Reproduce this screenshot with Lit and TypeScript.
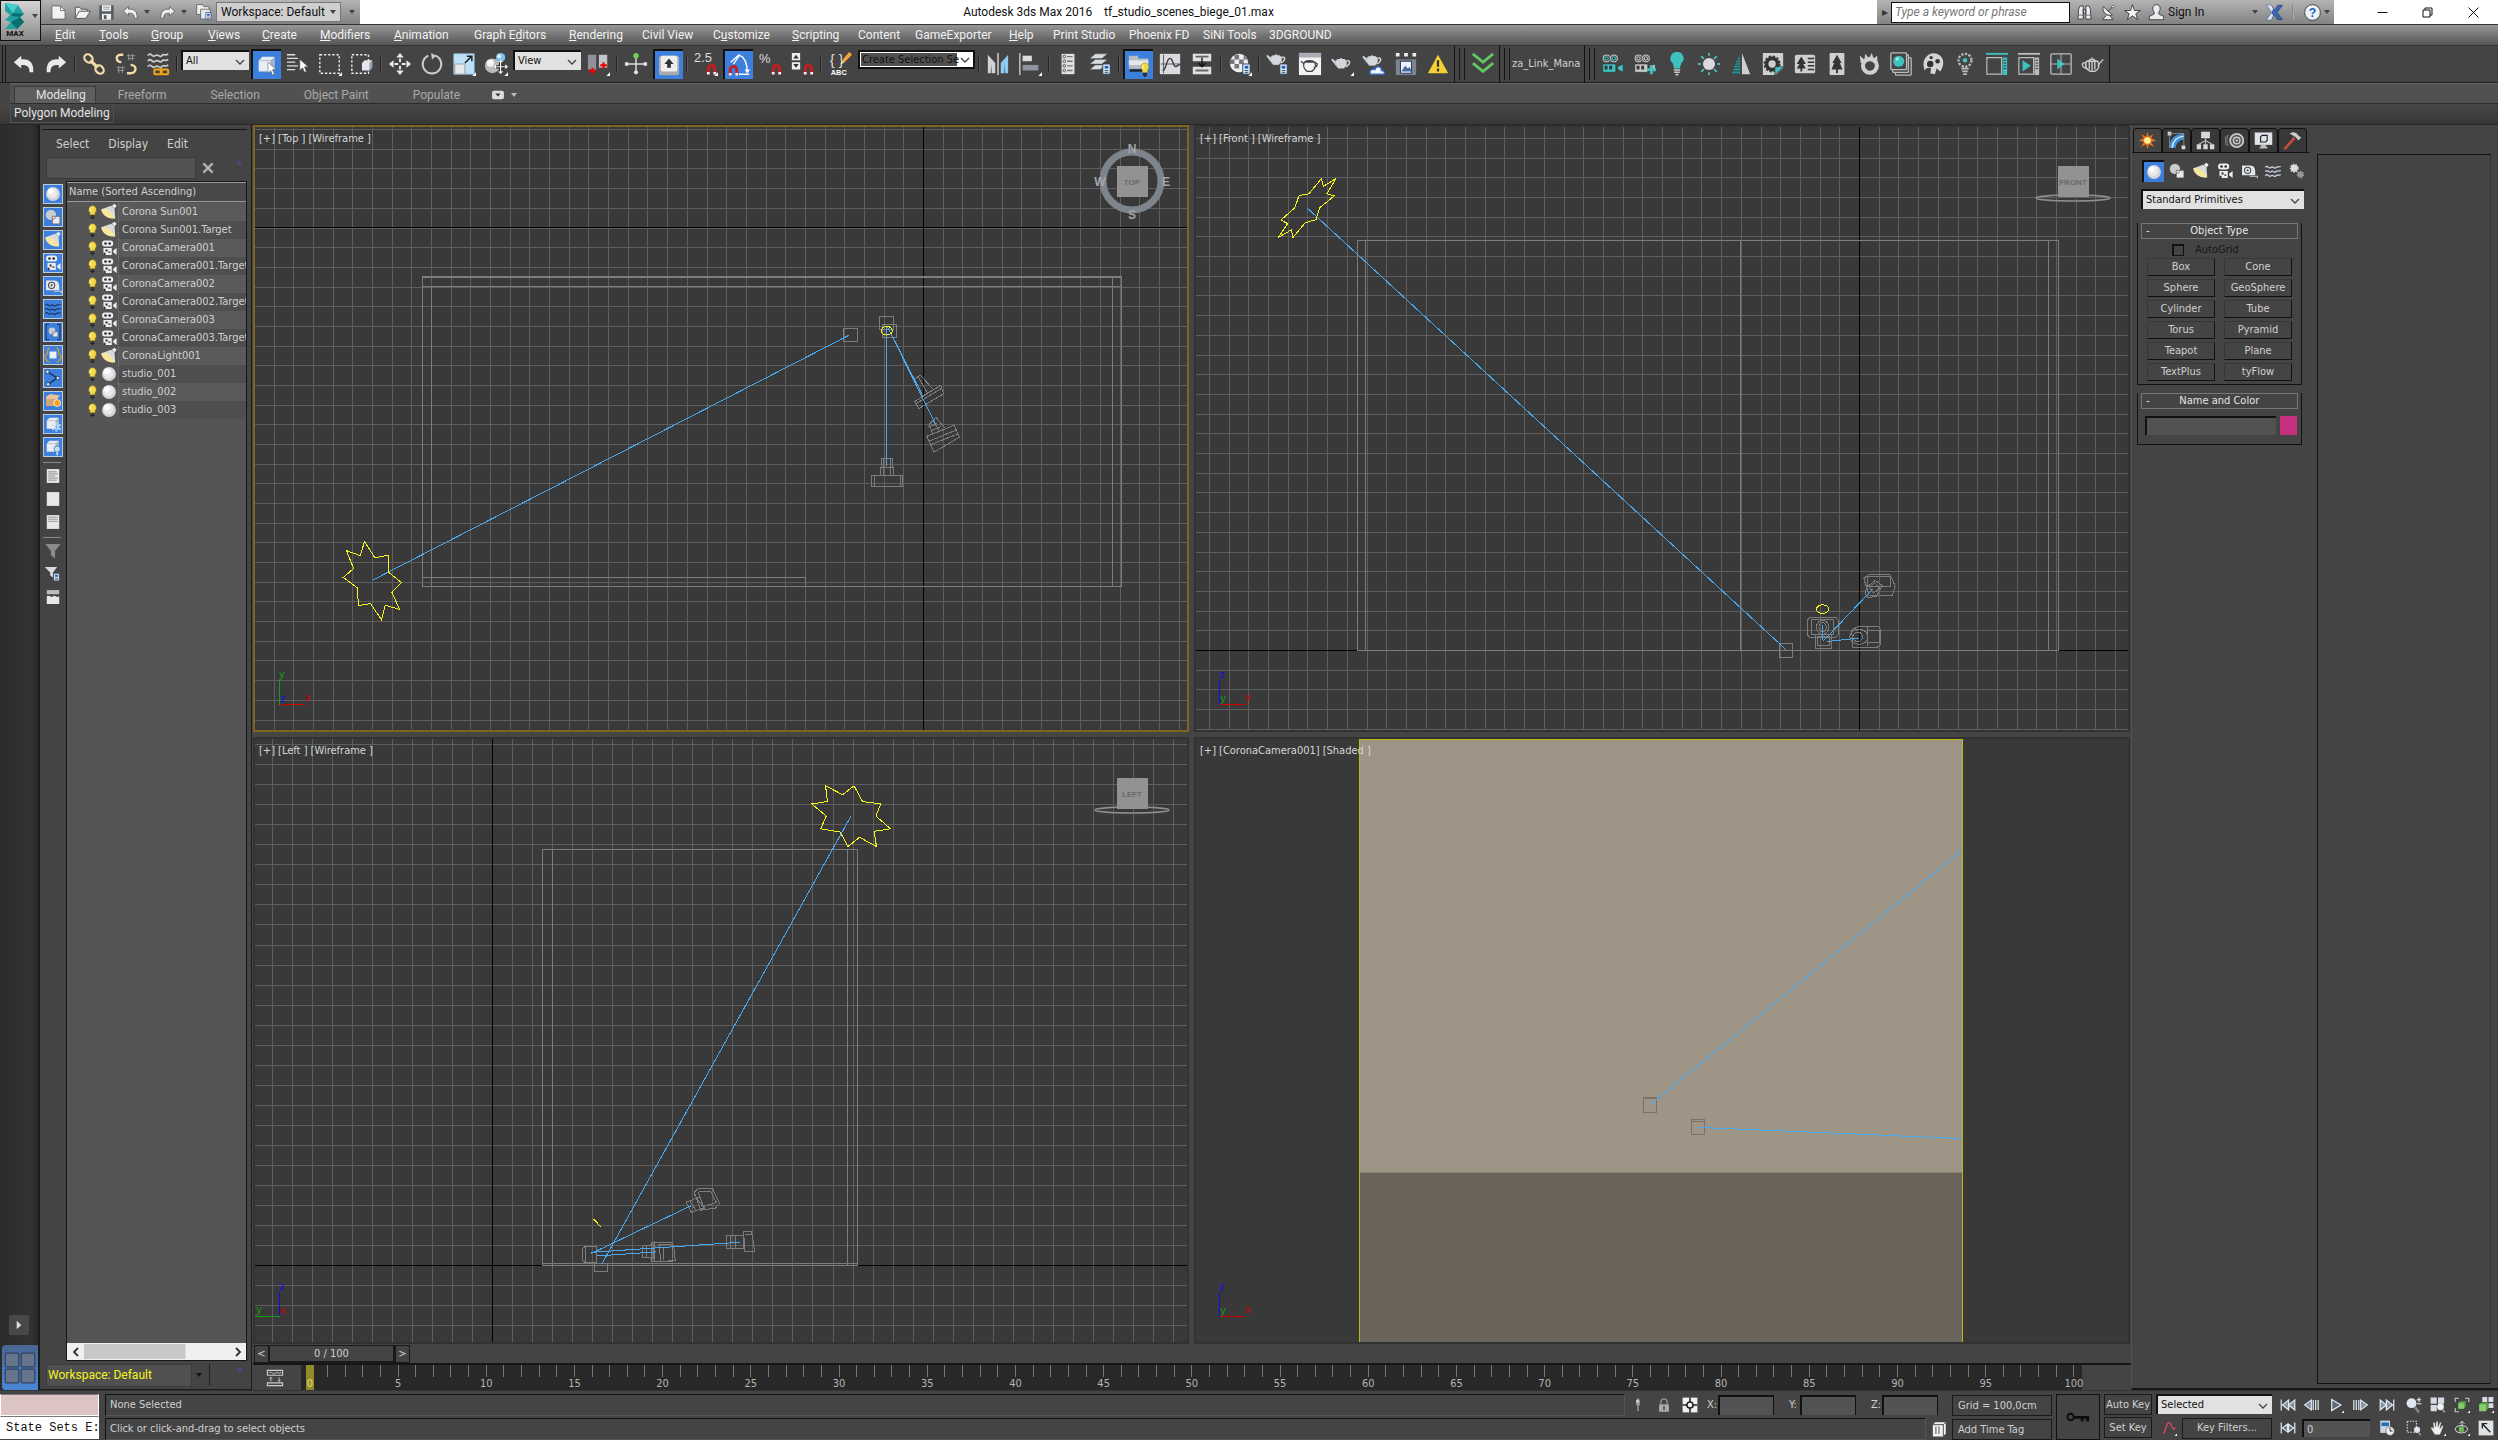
import { LitElement, html, svg, css, nothing, TemplateResult, SVGTemplateResult } from "lit";
import { customElement, state } from "lit/decorators.js";
import { classMap } from "lit/directives/class-map.js";

type Art = SVGTemplateResult;

/* ---------- shared icon parts ---------- */

const cursor = (x: number, y: number): Art =>
  svg`<path transform="translate(${x} ${y})" d="M0 0v12l3-3 2 5 2-1-2-5h4z" fill="#fff" stroke="#555" stroke-width=".6"/>`;
const corner = svg`<path d="M26 22v4h-4z" fill="#fff"/>`;
const magnet = (x: number, y: number): Art => svg`<g transform="translate(${x} ${y})" fill="none">
  <path d="M1.5 11V5a3.500 3.500 0 0 1 7 0v6" stroke="#c81e1e" stroke-width="3"/><path d="M0 10h3M7 10h3" stroke="#eee" stroke-width="2.600"/></g>`;
const teapot = (x: number, y: number, c = "#d3d6da"): Art => svg`<g transform="translate(${x} ${y})">
  <path d="M4 5c3-2 9-2 12 0 1 3 0 7-3 9H7C4 12 3 8 4 5z" fill="${c}" stroke="#777" stroke-width=".6"/>
  <path d="M4 7L0 3.500M4.500 10L0 4M16 6c4-2 5 3-1 6" fill="none" stroke="${c}" stroke-width="1.500"/><path d="M6 4.500h8M10 2.500v2" stroke="${c}" stroke-width="1.600"/></g>`;
const sheet = (x: number, y: number): Art => svg`<g transform="translate(${x} ${y})"><path d="M0 0h8v11H0z" fill="#e8eef5" stroke="#27415f"/><path d="M2 2h4v3H2z" fill="#1f5fc0"/><path d="M2 7h4M2 9h4" stroke="#27415f"/></g>`;
const reel = (c: string): Art => svg`<g fill="${c}" stroke="#2c2c2c" stroke-width=".6"><path d="M2 13h14v9H2zM18 16l6-3v9l-6-3z"/></g>
  <g fill="none" stroke="#2c2c2c" stroke-width=".8"><circle cx="6" cy="7" r="4.800" fill="#c9c9c9"/><circle cx="14" cy="7" r="4.800" fill="#c9c9c9"/><circle cx="6" cy="7" r="2.800" fill="${c}"/><circle cx="14" cy="7" r="2.800" fill="${c}"/></g>
  <g fill="#333"><circle cx="6" cy="7" r="1.200"/><circle cx="14" cy="7" r="1.200"/><path d="M4 15h3v4H4zM9 15h3v4H9z"/></g>`;
const bulb = svg`<path d="M13 1a7 7 0 0 1 4.500 12V17h-9v-4A7 7 0 0 1 13 1z" fill="#f3d94a" stroke="#8a7416" stroke-width=".8"/><path d="M11 5c-2 1-2 4-1 6" stroke="#fff" stroke-width="1.500" fill="none"/><path d="M9.500 19h7M9.500 21.500h7M11.500 24h3" stroke="#222" stroke-width="1.800"/>`;
const ball = svg`<circle cx="13" cy="13" r="10" fill="#d4d4d8"/><circle cx="12" cy="11.500" r="7.500" fill="#eaeaec"/><circle cx="10" cy="9" r="4" fill="#fff"/>`;
const shapes = svg`<circle cx="10" cy="10" r="7.500" fill="#c9ccd1"/><path d="M12 12h11v11H12z" fill="#e7e9ec" stroke="#555"/><path d="M12 17a7.500 7.500 0 0 0 5.500-5" fill="none" stroke="#555"/>`;
const lamp = svg`<path d="M16 4l5 4 1 14C12 23 3 17 2 9z" fill="#d9dadd"/><path d="M2 9c0 8 10 15 20 13C18 13 9 7 2 9z" fill="#f6e6a0"/><path d="M17 4l4-3 3 3-3 4z" fill="#eee"/>`;
const film = svg`<g fill="#eceef0"><rect x="3" y="2" width="16" height="9" rx="4"/><path d="M5 13h12v10H5zM19 17l5-4v10l-5-4z"/></g><g fill="#2b2e33"><circle cx="8" cy="6.500" r="1.900"/><circle cx="14" cy="6.500" r="1.900"/><path d="M8 15h3v3H8zM12 18h3v2h-3zM5 20h3v3H5z"/></g>`;
const tape = svg`<path d="M3 5h12c5 0 7 4 7 10v4H3z" fill="#e3e6ea"/><circle cx="11" cy="12" r="4.500" fill="none" stroke="#444" stroke-width="1.500"/><circle cx="11" cy="12" r="1.500" fill="#444"/><path d="M14 20.500h11v3" stroke="#ccc" fill="none" stroke-width="1.500"/>`;
const waves = (c: string): Art => svg`<g fill="none" stroke="${c}" stroke-width="1.800"><path d="M2 8c3-5 5 3 8 0s5 3 7 0 4 1 7-2M2 14c3-5 5 3 8 0s5 3 7 0 4 1 7-2M2 20c3-5 5 3 8 0s5 3 7 0 4 1 7-2"/></g>`;
const box3d = svg`<path d="M4 8l4-4h13v12l-4 4H4z" fill="#e9edf3"/><path d="M17 8l4-4v12l-4 4z" fill="#a9b2bf"/><path d="M4 8h13v12" fill="none" stroke="#98a1ad" stroke-width=".7"/>`;
const undo = svg`<path d="M2 11l8-7v4c9-1 14 4 13 14h-4c0-6-2-8-9-8v4z"/>`;
const redo = svg`<path d="M24 11l-8-7v4C7 7 2 12 3 22h4c0-6 2-8 9-8v4z"/>`;
const page = (lines: Art | typeof nothing): Art => svg`<path d="M4 3h18v20H4z" fill="#e6e7e9"/>${lines}`;
const T = "#3fc1c0";
const G = "#c9c9c9";

const ICONS: Record<string, Art> = {
  undo: svg`<g fill="#e9e9e9">${undo}</g>`,
  redo: svg`<g fill="#e9e9e9">${redo}</g>`,
  link: svg`<g fill="none" stroke="#f0dca8" stroke-width="2.400"><ellipse cx="7" cy="7" rx="5" ry="4" transform="rotate(45 7 7)"/><ellipse cx="19" cy="19" rx="5" ry="4" transform="rotate(45 19 19)"/><path d="M9 9l8 8" stroke-width="3.500"/></g>`,
  unlink: svg`<g fill="none" stroke="#f0dca8" stroke-width="2.600"><path d="M8 11c-6 0-7-8-1-8h3M18 14c7 0 7 9 0 9h-4"/></g><path d="M14 4h9M15 7h7M16 2v7M20 2v7M3 17h9M4 20h7M5 15v8M9 15v8" stroke="#999"/>`,
  bind: svg`<g transform="translate(0 -4)">${waves("#ccc")}</g><g fill="none" stroke="#f2a516" stroke-width="2.200"><rect x="9" y="19" width="8" height="5" rx="1"/><rect x="16" y="19" width="8" height="5" rx="1"/></g>`,
  selectObj: svg`${box3d}${cursor(14, 10)}`,
  byName: svg`<path d="M1 3h9M1 7h12M1 11h9M1 15h12M1 19h9" stroke="#ddd" stroke-width="1.400"/>${cursor(15, 8)}`,
  rect: svg`<path d="M2 3h21v20H2z" fill="none" stroke="#eee" stroke-width="1.500" stroke-dasharray="2.500 2"/>${corner}`,
  window: svg`<path d="M2 3h18v20H2z" fill="none" stroke="#eee" stroke-width="1.500" stroke-dasharray="2.500 2"/><path d="M13 12l3-3h8v8l-3 3h-8z" fill="#e3e6ec"/><path d="M21 12l3-3v8l-3 3z" fill="#9aa5b5"/>`,
  move: svg`<g fill="#eee"><path d="M13 1l4 5H9zM13 25l4-5H9zM1 13l5-4v8zM25 13l-5-4v8zM12 7h2v4h-2zM12 15h2v4h-2zM7 12h4v2H7zM15 12h4v2h-4z"/></g>`,
  rotate: svg`<path d="M17 4a10 10 0 1 1-8 0" fill="none" stroke="#ccc" stroke-width="2.200"/><path d="M12 1l6 3-5 4z" fill="#ccc"/>`,
  scale: svg`<path d="M2 2h22v22H2z" fill="#bfe1f8" stroke="#8ac3ea"/><path d="M3 13h11v11H3z" fill="#e7e9ec" stroke="#999"/><path d="M14 12l7-7M16 4.500h5.500V10" stroke="#222" stroke-width="1.600" fill="none"/>${corner}`,
  place: svg`<circle cx="9" cy="15" r="8" fill="#bbb"/><circle cx="7" cy="12" r="4" fill="#f4f4f4"/><circle cx="18" cy="6" r="5" fill="#7cc3ef"/><circle cx="16.500" cy="4.500" r="2" fill="#e4f3fd"/><path d="M18 9v14M11 16h14" stroke="#222" stroke-width="3.500"/><path d="M18 9v14M11 16h14M16 11l2-2 2 2M16 21l2 2 2-2M13 14l-2 2 2 2M23 14l2 2-2 2" stroke="#fff" fill="none" stroke-width="1.300"/>${corner}`,
  pivot: svg`<path d="M2 3h9v16H2z" fill="#8e929a"/><path d="M14 3h9v14h-9z" fill="#c3c6cc"/><path d="M7 17v7M3.500 20.500h7M19 11v7M15.500 14.500h7" stroke="#e00" stroke-width="2.200"/>${corner}`,
  manip: svg`<path d="M13 4v18M4 13h18" stroke="#ddd" stroke-width="1.600"/><circle cx="13" cy="4" r="3" fill="#6fd04f"/><circle cx="23" cy="13" r="2.300" fill="#ddd"/><circle cx="3" cy="13" r="2.300" fill="#ddd"/><circle cx="13" cy="22" r="2.300" fill="#ddd"/>`,
  keyboard: svg`<rect x="2" y="3" width="22" height="21" rx="3" fill="#aaa"/><rect x="4" y="3" width="18" height="17" rx="2" fill="#eee"/><path d="M13 6l5 6h-3v4h-4v-4H8z" fill="#333"/>`,
  snap: svg`<text x="0" y="11" font-size="14" fill="#ddd">2.5</text>${magnet(14, 13)}${corner}`,
  angle: svg`${magnet(2, 13)}<path d="M7 12L13 3 M4 10l9-8c7 3 9 9 9 19M13 23h11" stroke="#fff" fill="none" stroke-width="1.400"/><path d="M19 18l3 4 3-4z" fill="#fff"/>`,
  percent: svg`<text x="1" y="12" font-size="14" fill="#ddd">%</text>${magnet(15, 13)}`,
  spinner: svg`<path d="M2 1h9v8H2zM2 11h9v8H2z" fill="#eee"/><path d="M6.500 3l3 4h-6zM6.500 17l3-4h-6z" fill="#333"/>${magnet(15, 13)}`,
  named: svg`<text x="2" y="14" font-size="16" fill="#ddd">{ }</text><text x="3" y="25" font-size="8" font-weight="bold" fill="#fff">ABC</text><path d="M14 13l2-5 7-8 3 3-8 8z" fill="#f3a73b"/><path d="M14 13l1-3 2 2z" fill="#eee"/>`,
  mirror: svg`<path d="M13 1v24" stroke="#ddd" stroke-width="1.500"/><path d="M2 3l8 9v11H6V13l-1 10H2z" fill="#d0d3d8"/><path d="M24 3l-8 9v11h4V13l1 10h3z" fill="#8fcaf2"/>`,
  align: svg`<path d="M2 1v24" stroke="#ccc" stroke-width="1.500"/><path d="M5 4h10v6H5z" fill="#dcdee2"/><path d="M5 14h17v6H5z" fill="#8f959e"/>${corner}`,
  layerList: svg`<path d="M6 2h14v22H6z" fill="#dfe1e4"/><path d="M12 5h6M12 10h6M12 15h6M12 20h6" stroke="#777" stroke-width="1.500"/><g fill="none" stroke="#555"><circle cx="9" cy="5" r="1.500"/><circle cx="9" cy="10" r="1.500"/><circle cx="9" cy="15" r="1.500"/><circle cx="9" cy="20" r="1.500"/></g>`,
  layers: svg`<path d="M8 2h13l-6 5H2zM8 8h13l-6 5H2zM8 14h11l-6 5H2z" fill="#d8dbe0" stroke="#555" stroke-width=".5"/>${sheet(16, 13)}`,
  ribbon: svg`<path d="M2 3h10v3h11v11H2z" fill="#b6bcc6"/><path d="M2 8h21v5H2z" fill="#e4e7ec"/><path d="M3 19h14" stroke="#222" stroke-width="2.500"/><g transform="translate(11 10) scale(.65)">${bulb}</g>`,
  curve: svg`<path d="M2 2h22v22H2z" fill="#d9dbdf"/><path d="M6 3v20M3 13h20" stroke="#555"/><path d="M5 20c4 0 4-13 8-13s3 12 8 8l3-2" fill="none" stroke="#333" stroke-width="1.400"/>`,
  schematic: svg`<path d="M3 2h20v8H3zM3 16h20v8H3z" fill="#dfe1e5"/><path d="M13 6v9M9 12l4 4 4-4" stroke="#111" fill="none" stroke-width="1.500"/><path d="M6 5h14M6 20h14" stroke="#666" stroke-width="2"/>`,
  material: svg`<circle cx="12" cy="12" r="10" fill="#eceef0"/><g fill="#777"><path d="M7 3h5v5H7zM2 8h5v5H2zM12 8h5v5h-5zM7 13h5v5H7zM17 3l4 5h-4zM17 13h4l-4 5z"/></g>${sheet(16, 13)}${corner}`,
  renderSetup: svg`${teapot(1, 0)}${sheet(15, 13)}`,
  renderFrame: svg`<path d="M1 1h24v24H1z" fill="#f1f2f4"/><path d="M1 1h24v5H1z" fill="#a9aeb6"/><path d="M7 11c3-2 8-2 11 0 2 4 0 8-3 10h-5c-3-2-5-6-3-10zM7 13l-4-3M18 12c4-1 4 4-1 5M8 11h9M12.500 9v2" fill="none" stroke="#444" stroke-width="1.400"/>`,
  render: svg`${teapot(2, 4)}${corner}`,
  renderCloud: svg`${teapot(1, 1)}<path d="M9 24c-2-5 3-6 5-5 1-5 8-3 7 1 4 0 4 4 2 4z" fill="#f4f7fb" stroke="#2c6ad0" stroke-width="1.500"/>`,
  gallery: svg`<path d="M2 1h4v4H2zM11 1h4v4h-4zM20 1h4v4h-4z" fill="#eee"/><path d="M2 8h22v17H2z" fill="#7c8492"/><path d="M7 10h12v13H7z" fill="#eef3fa" stroke="#1d2d55"/><path d="M8 21l4-6 3 3 2-2 2 5z" fill="#446e9e"/>`,
  warn: svg`<path d="M13 3l11 20H2z" fill="#f6d031"/><path d="M13 9v7M13 18v3" stroke="#333" stroke-width="2.400"/>`,
  chevrons: svg`<path d="M2 2l11 9L24 2M2 12l11 9 11-9" fill="none" stroke="#63c564" stroke-width="3"/>`,
  cCam: reel(T),
  cCamAdd: svg`${reel(G)}<path d="M20 14v10M15 19h10" stroke="${T}" stroke-width="3"/>`,
  cBulb: svg`<path d="M13 0a7 7 0 0 1 4.500 12.500L16 18h-6l-1.500-5.500A7 7 0 0 1 13 0z" fill="${T}"/><path d="M9.500 19.500h7M10 22h6M11.500 24.500h3" stroke="${G}" stroke-width="1.700"/>`,
  cSun: svg`<circle cx="13" cy="13" r="6.500" fill="#dadada"/><path d="M13 1v3M13 22v3M1 13h3M22 13h3M4.500 4.500l3 3M18.500 18.500l3 3M4.500 21.500l3-3M18.500 7.500l3-3" stroke="${T}" stroke-width="2"/>`,
  cCone: svg`<path d="M12 1v23H3z" fill="#28666a"/><path d="M14 1l9 23h-9z" fill="#cfcfcf"/><path d="M4 22h8M5 19h7M6 16h6M7 13h5M8 10h4M10 7h2" stroke="${T}" stroke-dasharray="1.500 1"/>`,
  cRing: svg`<path d="M2 1h22v16l-8 8H2z" fill="#cfcfcf"/><circle cx="12" cy="13" r="6" fill="none" stroke="#333" stroke-width="4"/><circle cx="12" cy="13" r="8.500" fill="none" stroke="#333" stroke-width="1.500" stroke-dasharray="2.500 2"/><path d="M15 25v-9h9z" fill="${T}" stroke="#333" stroke-width=".7"/>`,
  cTreeList: svg`<rect x="2" y="3" width="22" height="20" rx="2" fill="#cfcfcf"/><path d="M9 5l5 8h-3l3 5h-4v3H8v-3H4l3-5H4z" fill="#333"/><path d="M16 7h7M16 11h7M16 15h7M16 19h7" stroke="#333" stroke-width="1.600"/>`,
  cTree: svg`<rect x="5" y="1" width="16" height="24" rx="1" fill="#cfcfcf"/><path d="M13 3l5 9h-2l3 7h-5v4h-2v-4H7l3-7H8z" fill="#333"/>`,
  cFire: svg`<circle cx="14" cy="15" r="7.500" fill="none" stroke="#cfcfcf" stroke-width="4.500"/><path d="M4 12L3 4l5 4 1-6 4 5 3-6 2 6 4-3v8" fill="#cfcfcf"/><circle cx="14" cy="15" r="5" fill="#444"/>`,
  cStack: svg`<g fill="#444" stroke="#bbb" stroke-width="1.400"><rect x="7" y="6" width="17" height="19" rx="1"/><rect x="4" y="3" width="17" height="19" rx="1"/><rect x="2" y="1" width="17" height="18" rx="1"/></g><circle cx="10.500" cy="10" r="6" fill="${T}"/><circle cx="9" cy="7.500" r="1.800" fill="#a8e8e6"/>`,
  cSkull: svg`<path d="M4 20C-1 8 9-1 17 2s9 11 4 19l-4-3-2 6-5-1 1-5c-3-2-5-1-7 2z" fill="#d5d5d5"/><circle cx="10" cy="13" r="3.500" fill="#333"/><circle cx="18" cy="10" r="2.500" fill="#333"/><circle cx="11" cy="6" r="1.800" fill="#333"/>`,
  cDotBulb: svg`<circle cx="13" cy="9" r="7" fill="none" stroke="#bbb" stroke-width="2.500" stroke-dasharray="2.500 1.500"/><circle cx="13" cy="9" r="2.500" fill="${T}"/><path d="M9 18h8M10 21h6M11 24h4" stroke="#bbb" stroke-width="1.800"/>`,
  cFrame: svg`<path d="M1 1h24v2H1z" fill="${T}"/><path d="M2 6h16v18H2z" fill="none" stroke="#bbb" stroke-width="1.300"/><path d="M19 6h5v19h-5z" fill="${T}"/><path d="M20 9h3M20 12h3M20 15h3M20 18h3" stroke="#333"/>`,
  cFramePlay: svg`<path d="M1 1h24v2H1z" fill="#bbb"/><path d="M2 6h16v18H2z" fill="none" stroke="#bbb" stroke-width="1.300"/><path d="M6 9l9 6-9 6z" fill="${T}"/><path d="M19 6h5v19h-5z" fill="#bbb"/><path d="M20 9h3M20 12h3M20 15h3M20 18h3" stroke="#333"/>`,
  cQuad: svg`<rect x="2" y="2" width="22" height="22" rx="1" fill="none" stroke="#bbb" stroke-width="1.400"/><path d="M13 2v22M2 13h22" stroke="#bbb"/><path d="M9 7l8 6-8 6z" fill="${T}"/>`,
  cTeapot: svg`<path d="M6 10h12c3 5 1 9-3 11h-5c-4-2-6-6-4-11zM6 12c-6-2-6 4 0 6M18 15l6-7M9 10v9M12 10v11M15 10v9M8 10c2-3 6-3 8 0M12 6v2" fill="none" stroke="#ccc" stroke-width="1.500"/>`,

  new: svg`<path d="M3 3h13l7 7v13H3z" fill="#f2f2f2" stroke="#444"/><path d="M16 3v7h7" fill="none" stroke="#444"/>`,
  open: svg`<path d="M2 22V5h7l2 3h9v3" fill="#eee" stroke="#444" stroke-width="1.300"/><path d="M2 22l6-11h17l-7 11z" fill="#f2f2f2" stroke="#444" stroke-width="1.300"/>`,
  save: svg`<path d="M2 2h22v22H2z" fill="#555a61"/><path d="M6 2h14v9H6zM6 15h14v9H6z" fill="#eee"/><path d="M8 5h10M8 8h10" stroke="#777"/><path d="M9 17h4v6H9z" fill="#555a61"/>`,
  qUndo: svg`<g fill="#f0f0f0" stroke="#444">${undo}</g>`,
  qRedo: svg`<g fill="#f0f0f0" stroke="#444">${redo}</g>`,
  project: svg`<path d="M1 1h9l2 3h8v12H1z" fill="#eee" stroke="#444"/><path d="M7 8h15v15H7z" fill="#dfe6ee" stroke="#444"/>${sheet(15, 13)}`,
  binoc: svg`<path d="M3 23l1-15 2-5h5v20zM23 23L22 8l-2-5h-5v20zM11 9h4v5h-4z" fill="#e9edf2" stroke="#333" stroke-width="1.300"/><path d="M4 17h7M15 17h7" stroke="#333"/>`,
  dish: svg`<path d="M5 4c-2 8 4 15 14 13zM12 11l8-7M9 18l-5 6h16l-5-6" fill="#eee" stroke="#333" stroke-width="1.300"/><circle cx="20" cy="4" r="2" fill="#fff" stroke="#333"/>`,
  star: svg`<path d="M13 1l3 9h9l-7 5 3 9-8-6-8 6 3-9-7-5h9z" fill="#f3f5f7" stroke="#333" stroke-width="1.300"/>`,
  user: svg`<path d="M13 1c6 0 7 6 4 11-1 3-1 4 1 4l6 3v5H2v-5l6-3c2 0 2-1 1-4C6 7 7 1 13 1z" fill="#e9edf2" stroke="#333" stroke-width="1.300"/>`,
  exchange: svg`<path d="M1 2h7l5 8 5-8h7l-8 11 8 11h-7l-5-8-5 8H1l8-11z" fill="#3c67b5" stroke="#1c2f66"/><path d="M1 2h7l3 6-3 5 3 5-3 6H1l8-11z" fill="#d8e2f2"/>`,
  help: svg`<circle cx="13" cy="13" r="12" fill="#eef3f9" stroke="#333" stroke-width="1.300"/><text x="13" y="20" font-size="19" font-weight="bold" text-anchor="middle" fill="#1f5fc0">?</text>`,
  min: svg`<path d="M3 13h20" stroke="#111" stroke-width="2"/>`,
  restore: svg`<path d="M4 8h14v14H4zM8 8V4h14v14h-4" fill="none" stroke="#111" stroke-width="2"/>`,
  close: svg`<path d="M3 3l20 20M23 3L3 23" stroke="#111" stroke-width="2"/>`,

  sphere: ball,
  shapes,
  lamp,
  film,
  tape,
  waves: waves("#c8d4e2"),
  wavesDark: waves("#1d3c66"),
  groups: svg`<path d="M7 2H3v22h4M19 2h4v22h-4" fill="none" stroke="#1d3c66" stroke-width="1.800"/><g transform="translate(5 5) scale(.65)">${shapes}</g>`,
  xref: svg`<path d="M8 3C3 3 7 13 3 13s0 10 5 10M18 3c5 0 1 10 5 10s0 10-5 10" fill="none" stroke="#d9962c" stroke-width="2"/><path d="M8 8h10v10H8z" fill="#eef1f5"/>`,
  bones: svg`<path d="M5 4l14 9-13 9" fill="none" stroke="#132c50" stroke-width="2"/><g fill="#eee" stroke="#132c50"><circle cx="5" cy="4" r="2.500"/><circle cx="20" cy="13" r="2.500"/><circle cx="6" cy="22" r="2.500"/></g>`,
  container: svg`<path d="M3 7l6-4 14 2-4 5v10H3z" fill="#e8c79c"/><path d="M3 10h16v10H3z" fill="#cfa676"/><circle cx="19" cy="16" r="5" fill="#f6a21c" stroke="#fff"/>`,
  frozen: svg`${box3d}<path d="M18 11v13M12 14l12 7M24 14l-12 7" stroke="#fff" stroke-width="2.500"/><path d="M18 11v13M12 14l12 7M24 14l-12 7" stroke="#5aaae6"/>`,
  hidden: svg`${box3d}<circle cx="19" cy="16" r="4.500" fill="#bfe1f8" stroke="#2c6ab0"/><path d="M19 20v5" stroke="#eee" stroke-width="2"/>`,
  pageText: page(svg`<path d="M6 7h12M6 10h14M6 13h10M6 16h14M6 19h12" stroke="#666"/>`),
  pageBlank: page(nothing),
  pageHead: page(svg`<path d="M6 6h14M6 9h14M6 12h14" stroke="#777"/>`),
  funnel: svg`<path d="M2 3h22l-8 10v11l-6-5v-6z" fill="#8b8b8b"/>`,
  funnelSheet: svg`<path d="M1 3h18l-6 8v7l-4-3v-4z" fill="#d8dade"/>${sheet(14, 12)}`,
  pageSplit: svg`<path d="M4 3h18v6H4z" fill="#b9bcc1"/><path d="M4 12c4-3 6 3 9 0s5 3 9 0v11H4z" fill="#e6e7e9"/>`,
  x: svg`<path d="M3 3l20 20M23 3L3 23" stroke="#b5b5b5" stroke-width="5"/>`,

  create: svg`<path d="M13 1l2 7 6-4-3 6 7 3-7 2 4 7-7-4-2 7-2-7-7 4 4-7-7-2 7-3-4-6 7 4z" fill="#e9721b"/><circle cx="13" cy="13" r="4.500" fill="#fff09a"/>`,
  modify: svg`<path d="M3 23C4 10 10 5 23 3v9c-7 1-10 4-11 11z" fill="#3f8fd8"/><path d="M7 23C8 13 13 8 23 7" fill="none" stroke="#d6ebfb" stroke-width="2"/><path d="M1 1h5v5H1zM20 20h5v5h-5z" fill="#ddd"/><path d="M3.500 3v20M3 3.500h20v18" stroke="#999" fill="none"/>`,
  hierarchy: svg`<path d="M7 1h12v9H7zM1 18h6v7H1zM10 18h6v7h-6zM19 18h6v7h-6z" fill="#d5d8dc"/><path d="M13 10v8M13 13L4 18M13 13l9 5" stroke="#bbb" stroke-width="1.500"/>`,
  motion: svg`<circle cx="16" cy="13" r="9" fill="#555" stroke="#c6c9cd" stroke-width="2.500"/><circle cx="16" cy="13" r="4.500" fill="none" stroke="#c6c9cd" stroke-width="2"/><circle cx="16" cy="13" r="1.500" fill="#ddd"/><path d="M5 5c-3 5-3 11 0 16M2 6c-2 5-2 9 0 14" fill="none" stroke="#999"/>`,
  display: svg`<path d="M1 2h24v17H1z" fill="#dfe3e8"/><path d="M9 8l2-2h7v7l-2 2H9z" fill="none" stroke="#222" stroke-width="1.600"/><path d="M7 24h12l-3-5h-6z" fill="#bbb"/>`,
  hammer: svg`<path d="M2 25L16 9" stroke="#c74a3c" stroke-width="3.500"/><path d="M9 4c5-4 9-2 12 2l4 3-4 4-4-5c-2 0-3-3-8-4z" fill="#c8cbd0"/>`,
  gears: svg`<circle cx="9" cy="9" r="5" fill="#ddd" stroke="#ddd" stroke-width="3" stroke-dasharray="2 1.500"/><circle cx="18" cy="18" r="4" fill="#999" stroke="#999" stroke-width="3" stroke-dasharray="2 1.500"/>`,

  trackToggle: svg`<path d="M2 2h22v7H2zM2 20h22v4H2z" fill="none" stroke="#ccc" stroke-width="1.600"/><path d="M4 6c4-4 6 3 9 0s5 2 9-1M7 18v-6M5 14l2-2 2 2M19 12v6M17 16l2 2 2-2" fill="none" stroke="#ccc" stroke-width="1.300"/>`,
  pin: svg`<path d="M13 1a6 8 0 0 1 2 14v9h-4v-9a6 8 0 0 1 2-14z" fill="#999" stroke="#222"/><circle cx="12" cy="7" r="2" fill="#ddd"/>`,
  lock: svg`<path d="M8 12V8a5 5 0 0 1 10 0v4" fill="none" stroke="#999" stroke-width="2"/><path d="M5 12h16v12H5z" fill="#aaa"/><path d="M13 15v6" stroke="#333" stroke-width="2"/>`,
  coordMode: svg`<path d="M1 1h24v24H1z" fill="#f0f0f0"/><circle cx="13" cy="13" r="5" fill="none" stroke="#222" stroke-width="2.500"/><path d="M13 1v7M13 18v7M1 13h7M18 13h7" stroke="#222" stroke-width="2.500"/>`,
  isolate: svg`<path d="M3 6l4-4h17v18l-4 5H3z" fill="#f2f2f2"/><path d="M3 6h17v19M20 6l4-4M8 9v12M13 9v12" stroke="#333" fill="none" stroke-width="1.400"/>`,
  key: svg`<circle cx="5" cy="13" r="3.500" fill="none" stroke="#0c0c0c" stroke-width="2"/><path d="M8 12h17v6h-3v-3h-3v3h-3v-3H8z" fill="#0c0c0c"/>`,
  tangent: svg`<path d="M3 22C8 22 8 4 13 4s5 18 10 8" fill="none" stroke="#d64b57" stroke-width="2.200"/>${corner}`,
  first: svg`<path d="M2 4v18M4 13l10-8v16zM14 13l10-8v16z" fill="#7f92a6" stroke="#dfe6ee" stroke-width="2"/>`,
  prev: svg`<path d="M1 13l11-8v16z" fill="#7f92a6" stroke="#dfe6ee" stroke-width="1.800"/><path d="M15 5v16M19 5v16M23 5v16" stroke="#dfe6ee" stroke-width="2"/>`,
  play: svg`<path d="M6 4l15 9-15 9z" fill="#5d6b7a" stroke="#dfe6ee" stroke-width="2"/>${corner}`,
  next: svg`<path d="M25 13L14 5v16z" fill="#7f92a6" stroke="#dfe6ee" stroke-width="1.800"/><path d="M3 5v16M7 5v16M11 5v16" stroke="#dfe6ee" stroke-width="2"/>`,
  last: svg`<path d="M24 4v18M22 13L12 5v16zM12 13L2 5v16z" fill="#7f92a6" stroke="#dfe6ee" stroke-width="2"/>`,
  keyMode: svg`<path d="M2 4v18M24 4v18M4 13l8-6v12zM22 13l-8-6v12z" fill="#5d6b7a" stroke="#dfe6ee" stroke-width="2"/>`,
  timeCfg: svg`<path d="M2 1h16v20H2z" fill="#c9d6e6"/><path d="M4 4h12v6H4z" fill="#2c6ab0"/><circle cx="18" cy="18" r="7" fill="#eee" stroke="#555"/><path d="M18 13v5h4" stroke="#222" stroke-width="1.500" fill="none"/>`,
  zoom: svg`<circle cx="9" cy="10" r="8" fill="#dfe8f1"/><path d="M14 16l7 9" stroke="#7d8894" stroke-width="4"/><path d="M21 1v7M17.500 4.500h7M18 11h7" stroke="#eee" stroke-width="1.800"/>`,
  zoomAll: svg`<path d="M1 1h10v10H1zM13 1h10v10H13zM1 13h10v10H1z" fill="#d5dce4"/><circle cx="17" cy="16" r="5.500" fill="#eef3f8"/><path d="M20 20l4 5" stroke="#aaa" stroke-width="2.500"/>`,
  extents: svg`<path d="M2 8V2h6M18 2h6v6M2 18v6h6" fill="none" stroke="#ccc" stroke-width="1.800"/><path d="M7 10l3-3h9v9l-3 3H7z" fill="#58a548"/><path d="M7 10h9v9H7z" fill="#86cc6f"/>${corner}`,
  extentsAll: svg`<path d="M7 0h8v8H7zM17 0h8v8h-8zM17 10h8v8h-8z" fill="#d5dce4"/><path d="M2 12l3-3h11v10l-3 4H2z" fill="#58a548"/><path d="M2 12h11v11H2z" fill="#86cc6f"/>${corner}`,
  region: svg`<path d="M2 2h15v18H2z" fill="none" stroke="#ddd" stroke-width="1.800" stroke-dasharray="2.500 2"/><circle cx="18" cy="16" r="5" fill="#dfe8f1"/><path d="M20 20l4 5" stroke="#999" stroke-width="2.500"/>`,
  pan: svg`<path d="M8 24c-4-5-5-9-7-11 1-2 4-1 5 1L5 5c1-2 3-1 3 0l1 6 1-8c1-2 3-1 3 0v8l3-7c2-1 3 0 2 2l-2 8 4-5c2 0 2 2 1 3-2 4-3 9-5 12z" fill="#f1f1f1" stroke="#555" stroke-width=".8"/>${corner}`,
  orbit: svg`<ellipse cx="12" cy="15" rx="10" ry="6" fill="none" stroke="#ddd" stroke-width="1.600"/><path d="M13 2v9M9 6l4-4 4 4" stroke="#ddd" fill="none" stroke-width="1.500"/><path d="M8 11h8v8H8z" fill="#6fbb59"/>${corner}`,
  maximize: svg`<path d="M1 1h24v24H1z" fill="#dfe3e8"/><path d="M7 6l13 14M7 14V6h8" stroke="#222" fill="none" stroke-width="2.200"/>`,
  gridQuad: svg`<g fill="#66758c" stroke="#33435c"><rect x="1" y="1" width="11" height="11" rx="1"/><rect x="14" y="1" width="11" height="11" rx="1"/><rect x="1" y="14" width="11" height="11" rx="1"/><rect x="14" y="14" width="11" height="11" rx="1"/></g>`,
  logo: svg`<path d="M3 0l13 2 6 9-4 3 4 5-7 7H3l6-7-6-2 5-5-5-4z" fill="#1fa3a0"/><path d="M3 0l13 2-5 8z" fill="#47d0cb"/><path d="M11 10l11 1-4 3-9-1zM9 19l9-5 4 5-7 7z" fill="#0c6f6f"/>`,
  pill: svg`<rect x="2" y="5" width="22" height="16" rx="4" fill="#ddd"/><path d="M8 10h10l-5 6z" fill="#333"/>`,
  right: svg`<path d="M8 4l10 9-10 9z" fill="#ddd"/>`,
};

const icon = (name: string): TemplateResult =>
  html`<svg class="icon" viewBox="0 0 26 26" aria-hidden="true">${ICONS[name]}</svg>`;
const tool = (name: string, on = false): TemplateResult =>
  html`<button class=${classMap({ tool: true, on })} aria-label=${name}>${icon(name)}</button>`;
const tools = (...names: string[]): TemplateResult[] => names.map((n) => tool(n));
const sep = html`<span class="sep"></span>`;
const grips = html`<span class="grips"></span>`;
const caret = html`<span class="caret"></span>`;
const combo = (label: string, value: string, kind: string): TemplateResult => html`
  <span class="combo ${kind}">
    <select aria-label=${label}><option>${value}</option></select>
    <svg class="chev" viewBox="0 0 10 6" aria-hidden="true"><path d="M1 1l4 4 4-4" fill="none" stroke="#444" stroke-width="1.300"/></svg>
  </span>`;

/* ---------- data ---------- */

/** Menu titles; an underscore stands before each mnemonic letter. */
const MENUS = ["_Edit", "_Tools", "_Group", "_Views", "_Create", "_Modifiers", "_Animation", "Graph E_ditors", "_Rendering",
  "Civil View", "C_ustomize", "_Scripting", "Content", "GameExporter", "_Help", "Print Studio", "Phoenix FD", "SiNi Tools", "3DGROUND"];

const NODES: [string, string][] = [
  ["Corona Sun001", "lamp"], ["Corona Sun001.Target", "lamp"],
  ["CoronaCamera001", "film"], ["CoronaCamera001.Target", "film"],
  ["CoronaCamera002", "film"], ["CoronaCamera002.Target", "film"],
  ["CoronaCamera003", "film"], ["CoronaCamera003.Target", "film"],
  ["CoronaLight001", "lamp"], ["studio_001", "sphere"], ["studio_002", "sphere"], ["studio_003", "sphere"],
];
const FILTERS = ["sphere", "shapes", "lamp", "film", "tape", "wavesDark", "groups", "xref", "bones", "container", "frozen", "hidden"];
const PRIMITIVES = ["Box", "Cone", "Sphere", "GeoSphere", "Cylinder", "Tube", "Torus", "Pyramid", "Teapot", "Plane", "TextPlus", "tyFlow"];
const CORONA = ["cCam", "cCamAdd", "cBulb", "cSun", "cCone", "cRing", "cTreeList", "cTree", "cFire", "cStack", "cSkull", "cDotBulb", "cFrame", "cFramePlay", "cQuad", "cTeapot"];

/* ---------- viewport drawings ---------- */

/** Construction grid around an origin, clipped to a 936 x 607 view. */
function grid(left: number, top: number, ox: number, oy: number, step: number): Art {
  let d = "";
  for (let k = Math.ceil((left - ox) / step); ox + k * step < left + 936; k++) d += `M${Math.round(ox + k * step) + 0.5} ${top}v607`;
  for (let k = Math.ceil((top - oy) / step); oy + k * step < top + 607; k++) d += `M${left} ${Math.round(oy + k * step) + 0.5}h936`;
  return svg`<path class="grid" d=${d}/>`;
}
const axes = (x: number, y: number, up: [string, string], side: [string, string], mid: [string, string], dir = 1): Art => svg`
  <path class="axis" d="M${x - 0.5} ${y}v-25" stroke=${up[1]}/><path class="axis" d="M${x} ${y - 0.5}h${25 * dir}" stroke=${side[1]}/>
  <text class="ax" x=${x + 2} y=${y - 27} fill=${up[1]}>${up[0]}</text>
  <text class="ax" x=${x + (dir > 0 ? 28 : -21)} y=${y - 4} fill=${side[1]}>${side[0]}</text>
  <text class="ax" x=${x + 3} y=${y - 3} fill=${mid[1]}>${mid[0]}</text>`;
const R = "#d00000", B = "#1010e0", GR = "#10a010";
const cube = (x: number, y: number, label: string): Art => svg`
  <ellipse cx=${x} cy=${y + 17} rx="37" ry="3" fill="none" stroke="#8b8f94" stroke-width="1.500"/>
  <rect x=${x - 15} y=${y - 15} width="31" height="31" fill="#929292"/>
  <text class="face" x=${x} y=${y + 4}>${label}</text>`;

const topView = svg`
  ${grid(253, 125, 923, 227.5, 19.68)}
  <path class="origin" d="M253 227.500h936M923.500 125v607"/>
  <g transform="translate(250 120) scale(.6059 .3954)">
    <path class="wire" d="M285 397H1438V1179H285zM285 399H1438M285 422H1438M300 422V1179M1424 397V1179M285 1156H917V1179M979 527h23v33h-23zM1039 497h23v33h-23zM1044 517h23v33h-23z"/>
    <path class="wire" d="M1026 899h51v28h-51zM1030 899v28M1073 899v28M1040 878h22v21h-22zM1042 857h18v21h-18zM1045 857v42M1057 857v42"/>
    <path class="wire" d="M1097 712L1140 671L1145 692L1104 730zM1099 718L1142 678M1097 655L1106 645L1128 682L1110 698zM1103 650L1118 690"/>
    <path class="wire" d="M1117 800L1162 772L1171 802L1129 840zM1121 812L1166 784M1121 770L1132 752L1148 781L1127 794zM1127 760L1138 786M1122 822L1168 794M1120 776L1134 768M1124 786L1140 776"/>
    <path class="aim" d="M989 544L202 1164M1051 520L1050 875M1051 520L1108 690M1051 520L1131 768"/>
    <path class="sun" d="M189 1066L206 1107L228 1101L228 1143L250 1170L234 1194L247 1238L223 1227L217 1264L199 1223L179 1228L177 1183L154 1157L171 1134L159 1089L182 1102z"/>
    <ellipse class="sun" cx="1051" cy="533" rx="9" ry="11"/>
  </g>
  <circle cx="1132" cy="181" r="29" fill="none" stroke="#7d848c" stroke-width="7"/>
  <rect x="1117" y="166" width="31" height="31" fill="#929292"/>
  <text class="face" x="1132" y="185">TOP</text>
  <text class="wind" x="1132" y="153">N</text><text class="wind" x="1132" y="219">S</text>
  <text class="wind" x="1100" y="186">W</text><text class="wind" x="1166" y="186">E</text>
  ${axes(280, 705, ["y", GR], ["x", R], ["z", B])}`;

const frontView = svg`
  ${grid(1194, 125, 1859, 650, 19.7)}
  <path class="origin" d="M1194 650.500h163M2059 650.500h71M1859.500 125v607"/>
  <g transform="translate(1190 120) scale(.6059 .3954)">
    <path class="wire" d="M276 304H1433V1341H276zM290 304V1341M1417 304V1341M909 304V1341M973 1325h22v34h-22z"/>
    <path class="wire" d="M1112 1160l8-11h35l9 30-5 23h-38zM1118 1155h38v26h-38zM1117 1182l14-18 12 14-10 26-14 5-5-12zM1122 1182l8-12 8 14-10 14z"/>
    <path class="wire" d="M1022 1258h44l4 8v36l-4 6h-44l-3-6v-36zM1026 1263h36v38h-36zM1033 1300h26v36h-26zM1036 1306h20v24h-20z"/>
    <ellipse class="wire" cx="1044" cy="1283" rx="10" ry="18"/><ellipse class="wire" cx="1044" cy="1283" rx="6" ry="12"/>
    <path class="wire" d="M1092 1290l12-10h32l4 10v36l-6 8h-40zM1118 1283v48M1118 1290h20v32h-20z"/>
    <ellipse class="wire" cx="1104" cy="1307" rx="15" ry="19"/><ellipse class="wire" cx="1102" cy="1307" rx="8" ry="12"/>
    <path class="aim" d="M193 222L984 1340M1045 1318L1127 1186M1051 1319L1104 1310M1044 1278V1316"/>
    <path class="sun" d="M217 148L220 168L241 148L226 186L238 192L214 222L208 252L190 260L170 297L167 278L146 297L161 262L150 253L173 222L180 191L196 187z"/>
    <ellipse class="sun" cx="1044" cy="1237" rx="10" ry="11"/>
  </g>
  ${cube(2073, 181, "FRONT")}
  ${axes(1220, 705, ["z", B], ["x", R], ["y", GR])}`;

const leftView = svg`
  ${grid(253, 737, 492, 1265, 20.03)}
  <path class="origin" d="M253 1265.500h289M858 1265.500h331M492.500 737v607"/>
  <g transform="translate(250 730) scale(.6059 .4018)">
    <path class="wire" d="M482 297H1002V1332H482zM499 297V1332M986 297V1332M482 1329H1002M568 1328h22v20h-22z"/>
    <path class="wire" d="M549 1290l5-5h18v41h-18l-5-5zM553 1285v41"/>
    <path class="wire" d="M733 1150l8-10h22l12 38-7 12-24 5zM720 1175l22-13 8 28-22 10zM726 1172l10 24M740 1150l20-2 10 28-22 10zM733 1156l16 34"/>
    <path class="wire" d="M648 1285l18-5v35l-18-3zM655 1282v32M662 1275h36v48h-36zM668 1272v50M675 1280l24 2 3 38-24 3zM682 1286v34"/>
    <path class="wire" d="M787 1259h28v32h-28zM793 1259v32M801 1259v32M815 1248h13l5 50h-17zM817 1256h12"/>
    <path class="aim" d="M992 214L581 1328M563 1303L728 1184M563 1300L808 1275M573 1309L670 1299"/>
    <path class="sun" d="M997 139L1011 178L1041 184L1033 214L1057 246L1030 252L1034 290L1006 267L987 290L974 254L942 246L951 214L927 184L953 178L950 139L978 161zM567 1217L580 1238"/>
  </g>
  ${cube(1132, 793, "LEFT")}
  ${axes(280, 1317, ["z", B], ["y", GR], ["x", R], -1)}`;

const cameraView = svg`
  <rect x="1360" y="739" width="603" height="434" fill="#9f9586"/>
  <rect x="1360" y="1173" width="603" height="170" fill="#6b645b"/>
  <path d="M1360 1172.500h603" stroke="#87806f"/>
  <g transform="translate(1190 730) scale(.6059 .4018)">
    <path class="wire dim" d="M748 914h22v38h-22zM748 917h22M828 969h21v38h-21zM828 974h21"/>
    <path class="aim" d="M760 932L1276 297M838 989L1276 1017"/>
  </g>
  <rect x="1359.500" y="739.500" width="603" height="603" fill="none" stroke="#b9bb10"/>
  ${axes(1220, 1317, ["z", B], ["x", R], ["y", GR])}`;

const VIEWS = [
  { name: "Top ", mode: "Wireframe ", box: "253 125 936 607", art: topView },
  { name: "Front ", mode: "Wireframe ", box: "1194 125 936 607", art: frontView },
  { name: "Left ", mode: "Wireframe ", box: "253 737 936 607", art: leftView },
  { name: "CoronaCamera001", mode: "Shaded ", box: "1194 737 936 607", art: cameraView },
];

@customElement("app-root")
export class AppRoot extends LitElement {
  @state() private activeView = 0;

  static styles = css`
    :host { display: flex; flex-direction: column; min-height: 100vh; background: #444; color: #d0d0d0;
      font: 11px/14px "DejaVu Sans Condensed", Tahoma, "Noto Sans", sans-serif; }
    * { box-sizing: border-box; }
    button, input, select { font: inherit; color: inherit; margin: 0; padding: 0; border: 0; background: none; border-radius: 0; white-space: pre; }
    svg { display: block; }
    svg text { font-family: "Liberation Sans", sans-serif; }
    .icon { width: 24px; height: 24px; }
    .caret { border: 3px solid transparent; border-top: 4px solid #444; border-bottom: 0; }
    .segoe, .menu, .ribbon { font: 12px/16px Roboto, "Open Sans", sans-serif; }

    .head { display: grid; grid-template-columns: 41px 1fr; grid-template-rows: 24px 21px; background: linear-gradient(#9a9a9a, #555) bottom / 100% 21px no-repeat #fff; }
    .app { grid-row: span 2; height: 41px; display: grid; grid-template-columns: 28px 12px; place-items: center; align-content: center; border: 1px solid #111;
      background: linear-gradient(#d5d5d5, #8a8a8a); color: #111; font-size: 8px; line-height: 9px; font-weight: bold; }
    .app .icon { width: 26px; height: 26px; }
    .title { display: flex; color: #111; min-width: 0; }
    .title h1 { flex: 1; margin: 0; align-self: center; text-align: center; font: inherit; white-space: pre; }
    .quick, .info { display: flex; align-items: center; background: linear-gradient(#b4b4b4, #828282); }
    .quick { width: 319px; padding-left: 5px; }
    .quick .tool, .info .tool { width: 24px; height: 22px; }
    .quick .icon, .info .icon { width: 17px; height: 17px; }
    .quick .tool + .caret { margin: 0 5px 0 2px; }
    .workspace { display: flex; flex: 1; height: 20px; margin-right: 8px; border: 1px solid #777; background: #cfcfcf; position: relative; align-items: center; }
    .workspace select { flex: 1; appearance: none; padding-left: 4px; }
    .workspace .caret { margin-right: 4px; }
    .quick > .caret:last-child { margin-right: 5px; }
    .info { width: 457px; padding: 0 4px; }
    .info input { width: 179px; height: 21px; margin: 0 2px; padding: 0 3px; background: #fff; border: 1px solid #111; font-style: italic; }
    .info input::placeholder { color: #777; opacity: 1; }
    .info .arrow { width: 8px; color: #333; }
    .info .grow { flex: 1; text-align: left; }
    .info .grow + .caret { margin-right: 4px; }
    .info .sep { margin: 0 6px; border-right-color: #aaa; background: #888; }
    .wins { display: flex; width: 164px; justify-content: space-between; padding: 0 14px 0 37px; }
    .wins .tool { width: 22px; height: 24px; }
    .wins .icon { width: 13px; height: 13px; }
    .menu { display: grid; align-items: center; padding-left: 9px; color: #f2f2f2;
      grid-template-columns: 44px 52px 57px 54px 58px 74px 80px 95px 73px 71px 79px 66px 57px 94px 44px 76px 74px 66px 70px; border-top: 1px solid #333; }
    .menu button { text-align: left; padding-left: 5px; }

    .tool { width: 32px; height: 30px; display: flex; align-items: center; justify-content: center; flex: none; }
    .tool.on { background: #3c7fdc; border: 1px solid #111; border-width: 2px 0 0 2px; width: 30px; margin: 0 1px; }
    .bar { display: flex; align-items: center; height: 38px; padding-left: 8px; border-bottom: 1px solid #1b1b1b; border-top: 1px solid #333; overflow: hidden;
      background: linear-gradient(90deg, transparent 2px, #161616 2px 3px, transparent 3px 5px, #161616 5px 6px, transparent 6px) #444; }
    .sep { width: 2px; height: 16px; margin: 0 2px; background: #222; border-right: 1px solid #5a5a5a; flex: none; }
    .grips { width: 6px; height: 32px; margin: 0 2px 0 4px; border: 1px solid #161616; border-width: 0 1px; flex: none; }
    .group { display: flex; align-items: center; height: 38px; border-right: 1px solid #111; flex: none; }
    .combo { position: relative; display: flex; flex: none; background: #e1e1e1; color: #111; border: 1px solid #111; border-width: 2px 0 0 2px; height: 20px; }
    .combo select { appearance: none; flex: 1; min-width: 0; padding: 0 18px 0 3px; }
    .chev { position: absolute; right: 4px; top: 7px; width: 10px; height: 6px; pointer-events: none; }
    .combo.short { width: 68px; margin: 4px 1px 0; align-self: flex-start; }
    .combo.sets { width: 117px; height: 19px; margin: 4px 1px 0 2px; align-self: flex-start; background: #fff; border: 2px solid #111; }
    .combo.sets select { padding: 0 14px 0 2px; background: linear-gradient(#505050, #505050) 1px 1px / calc(100% - 17px) calc(100% - 2px) no-repeat; }
    .combo.sets .chev { top: 5px; right: 3px; }
    .script { width: 68px; overflow: hidden; margin-right: 4px; }

    .ribbon { display: flex; height: 21px; margin-left: 10px; padding: 2px 0 0 4px; background: #515151; border-top: 1px solid #666; border-bottom: 1px solid #2c2c2c; color: #a9a9a9; }
    .ribbon button { padding: 0 22px; }
    .ribbon .sel { padding: 0 9px 0 21px; background: #5e5e5e; border: 1px solid #3a3a3a; border-bottom: 0; color: #e2e2e2; }
    .ribbon .more { display: flex; align-items: center; gap: 5px; padding: 0 8px; }
    .ribbon .more .icon { width: 16px; height: 14px; }
    .ribbon .caret { border-top-color: #bbb; }
    .panelbar { height: 20px; padding-left: 10px; background: linear-gradient(#474747, #373737); }
    .panelbar button { height: 19px; padding: 0 3px; border: 1px solid #505050; border-top: 0; font: 12px/18px Roboto, sans-serif; color: #e2e2e2; }

    .main { flex: 1; display: flex; min-height: 800px; border-top: 1px solid #262626; }
    .strip { width: 38px; background: linear-gradient(90deg, #2c2c2c, #333 80%, #262626); display: flex; flex-direction: column; justify-content: flex-end; align-items: center; gap: 10px; flex: none; }
    .strip .go { width: 20px; height: 20px; background: #484848; border-radius: 2px; display: grid; place-items: center; }
    .strip .go .icon { width: 12px; height: 12px; }
    .strip .quad { width: 36px; height: 45px; margin-left: 2px; border-radius: 4px 0 0 4px; background: linear-gradient(#4a6592, #4a86d8); display: grid; place-items: center; }
    .strip .quad .icon { width: 32px; height: 32px; }

    .explorer { width: 214px; padding: 4px 4px 0 2px; border: 1px solid #1c1c1c; border-width: 0 1px 1px 2px; margin-right: 1px; display: grid; flex: none;
      grid-template: 26px 26px 1fr 28px / 24px 1fr; }
    .explorer nav { grid-column: span 2; display: flex; gap: 19px; padding: 2px 0 0 14px; border-top: 1px solid #151515; font-size: 12px; align-items: center; }
    .find { grid-column: span 2; display: flex; align-items: center; padding-left: 4px; }
    .find input { width: 150px; height: 22px; background: #525252; border: 1px solid #3a3a3a; }
    .find button { width: 24px; height: 22px; display: grid; place-items: center; }
    .find .icon { width: 12px; height: 12px; }
    .dbl { margin: 0 4px 10px auto; color: #4b4b9e; font-weight: bold; }
    .filters { display: flex; flex-direction: column; gap: 3px; padding: 3px 0 0 1px; }
    .filters button { width: 20px; height: 20px; display: grid; place-items: center; }
    .filters button.lit { background: #3c7fdc; border: 1px solid #bcd; }
    .filters .icon { width: 18px; height: 18px; }
    .filters hr { width: 18px; margin: 2px 0 0; border: 0; border-top: 1px solid #888; }
    .list { border: 1px solid #161616; background: #555; display: flex; flex-direction: column; min-width: 0; }
    .list h2 { margin: 0 0 1px; padding: 2px; height: 20px; font: inherit; border: 1px solid #999; border-width: 1px 0; background: #484848; }
    .rows { flex: 1; list-style: none; margin: 0; padding: 0; overflow: hidden; }
    .rows li { display: flex; height: 18px; align-items: center; padding-left: 18px; }
    .rows .name { flex: 1; padding-left: 3px; line-height: 18px; background: #5a5a5a; white-space: nowrap; overflow: hidden; border-left: 1px dotted #777; }
    .rows li:nth-child(even) .name { background: #4e4e4e; }
    .rows .icon { width: 15px; height: 15px; flex: none; }
    .rows .icon + .icon { width: 18px; height: 18px; }
    .hscroll { height: 17px; background: #f0f0f0; display: flex; justify-content: space-between; color: #333; font-weight: bold; }
    .hscroll button { width: 17px; }
    .hscroll .chev-l, .hscroll .thumb { flex: 1; }
    .hscroll .thumb { background: linear-gradient(#c8c8c8, #c8c8c8) 0 / 70% 15px no-repeat; }
    .hscroll svg { width: 8px; height: 10px; margin: auto; }
    .layout { grid-column: span 2; display: flex; align-items: center; }
    .layout select { appearance: none; width: 146px; height: 23px; margin-left: 4px; background: #505050; border: 1px solid #3c3c3c; color: #f4f41c; padding-left: 1px; font: 12px/16px Roboto, sans-serif; }
    .layout .caret { margin: 0 7px 0 4px; border-top-color: #111; }
    .layout i { height: 22px; border-left: 1px solid #222; }

    .center { flex: 1; display: flex; flex-direction: column; min-width: 0; }
    .views { flex: 1; display: grid; grid-template: 1fr 1fr / 1fr 1fr; gap: 5px; margin-right: 1px; }
    .view { position: relative; min-width: 0; min-height: 0; background: #393939; border: 2px solid #323232; overflow: hidden; }
    .view.active { border-color: #7f6420; }
    .view svg { position: absolute; inset: -2px; width: calc(100% + 4px); height: calc(100% + 4px); clip-path: inset(2px); }
    .tags { position: absolute; left: 4px; top: 5px; display: flex; gap: 3px; color: #d6d6d6; }
    .grid { stroke: #5e5e5e; fill: none; shape-rendering: crispEdges; }
    .origin { stroke: #000; fill: none; shape-rendering: crispEdges; }
    .wire, .aim, .sun { fill: none; vector-effect: non-scaling-stroke; shape-rendering: crispEdges; }
    .axis { shape-rendering: crispEdges; }
    .wire { stroke: #7c7c7c; }
    .wire.dim { stroke: #77726a; }
    .aim { stroke: #4aa8ee; }
    .sun { stroke: #f6f61c; }
    .view text.ax { font-size: 11px; text-anchor: middle; }
    .view text.face { font-size: 8px; font-weight: bold; text-anchor: middle; fill: #6a6a6a; }
    .view text.wind { font-size: 12px; font-weight: bold; text-anchor: middle; fill: #a3a6a9; }

    .slider { display: flex; height: 19px; padding: 1px 0 0 1px; }
    .slider button { width: 15px; border: 1px solid #1a1a1a; }
    .slider .frame { width: 126px; border-width: 1px 2px 2px 1px; }
    .track { display: flex; height: 27px; padding-right: 49px; border-top: 2px solid #161616; }
    .track > button { width: 48px; display: grid; place-items: center; padding-right: 4px; }
    .track > button .icon { width: 18px; height: 18px; }
    .ticks { flex: 1; display: flex; height: 25px; background: #282828; color: #b5b5b5; font-size: 11px; }
    .tick { flex: 1 1 0; width: 0; display: flex; justify-content: center; align-items: flex-end; background: linear-gradient(#777, #777) top / 1px 12px no-repeat; line-height: 13px; }
    .tick.now { background: linear-gradient(#938a2c, #938a2c) center / 8px 100% no-repeat; color: #e8e070; }

    .side { width: 367px; display: grid; grid-template-columns: 177px 1fr; gap: 8px; padding-right: 7px; border-bottom: 2px solid #161616; border-left: 1px solid #505050; flex: none; }
    .cmd { display: flex; flex-direction: column; }
    .tabs { display: flex; height: 28px; padding: 3px 0 0 1px; border-bottom: 1px solid #111; }
    .tabs button { width: 29px; display: grid; place-items: center; border: 1px solid #111; border-bottom: 0; border-radius: 4px 4px 0 0; background: #383838; }
    .tabs button:first-child { background: #444; }
    .tabs .icon { width: 19px; height: 19px; }
    .kinds { display: flex; height: 36px; align-items: center; padding-left: 9px; }
    .kinds .tool { width: 24px; height: 22px; }
    .kinds .tool.on { width: 22px; }
    .kinds .icon { width: 18px; height: 18px; }
    .cmd .combo { width: 163px; margin-left: 9px; }
    .roll { margin: 8px 6px 0 5px; padding: 0 3px 3px; position: relative; border: 1px solid #111; border-top: 0; width: 165px; }
    .roll.first { margin-top: 14px; }
    .roll h3 { margin: 0 0 3px; height: 16px; border: 1px solid #777; font: inherit; display: flex; align-items: center; color: #e6e6e6; }
    .roll h3 span { flex: 1; text-align: center; padding-right: 8px; }
    .roll h3 button { padding-left: 4px; }
    .auto { display: flex; align-items: center; gap: 11px; padding-left: 31px; height: 16px; color: #161616; }
    .auto input { appearance: none; width: 12px; height: 12px; border: 1px solid #111; border-width: 2px 1px 1px 2px; }
    .prims { display: grid; grid-template-columns: 1fr 1fr; gap: 3px 9px; padding: 0 6px; }
    .prims button { height: 18px; border: 1px solid #111; border-color: #383838 #111 #111 #383838; }
    .named { display: flex; gap: 4px; padding: 4px 1px 6px 4px; }
    .named input { flex: 1; min-width: 0; height: 19px; background: #525252; border: 1px solid #111; border-width: 2px 0 0 2px; }
    .named button { width: 17px; height: 19px; background: #c5307f; }
    .empty { margin: 29px 0 4px; border: 1px solid #111; border-right-color: #333; }

    .status { height: 50px; display: flex; padding-top: 3px; gap: 4px; border-top: 1px solid #333; }
    .listener { width: 99px; display: grid; grid-template-rows: 22px 23px; flex: none; }
    .listener input { min-width: 0; width: 100%; padding-left: 5px; border: 1px solid #fff; border-top-color: #777; background: #fff; color: #111; font: 12px/16px "Liberation Mono", monospace; }
    .listener input.pink { background: #dcc3c4; }
    .lines { flex: 1; display: grid; grid-template-rows: 22px 22px; gap: 2px; margin-left: 2px; }
    .line { display: flex; align-items: center; min-width: 0; }
    .msg { flex: 1; height: 22px; line-height: 20px; padding-left: 4px; border: 1px solid #111; border-right-color: #555; border-bottom-color: #555; }
    .line .tool { width: 26px; height: 22px; }
    .line .icon, .nav .icon { width: 16px; height: 16px; }
    .line label { display: flex; align-items: center; margin: 0 11px 0 4px; width: 67px; }
    .line label input { width: 56px; height: 20px; margin-left: auto; background: #535353; border: 1px solid #111; border-width: 2px 1px 0 2px; }
    .cell { height: 21px; border: 1px solid #1a1a1a; text-align: center; }
    .cell.grid-size { width: 100px; margin-left: 3px; padding-left: 5px; line-height: 19px; text-align: left; }
    .cell.tag { margin-left: 0; }
    .keybtn { width: 44px; border: 1px solid #111; display: grid; place-items: center; }
    .pair { display: grid; grid-template-rows: 21px 22px; gap: 2px; flex: none; }
    .pair.auto-keys { width: 48px; }
    .pair.filters2 { width: 116px; }
    .pair .line .cell { flex: 1; }
    .nav { display: grid; grid-template-columns: 24px 24px 24px 24px 30px 24px 24px 24px 24px; grid-template-rows: 22px 22px; gap: 1px 0; place-items: center; flex: none; }
    .nav .tool { width: 24px; height: 22px; }
    .frameno { grid-column: 2 / 5; justify-self: stretch; margin: 0 2px; height: 18px; background: #535353; border: 1px solid #111; border-width: 2px 0 0 2px; padding-left: 3px; min-width: 0; }
  `;

  private menuLabel(m: string) {
    const i = m.indexOf("_");
    return i < 0 ? m : html`${m.slice(0, i)}<u>${m[i + 1]}</u>${m.slice(i + 2)}`;
  }

  private header() {
    return html`<header class="head segoe">
      <button class="app" aria-label="Application menu">${icon("logo")}${caret}<span>MAX</span></button>
      <div class="title">
        <div class="quick">
          ${tools("new", "open", "save", "qUndo")}${caret}${tool("qRedo")}${caret}${tool("project")}
          <span class="workspace"><select aria-label="Workspace"><option>Workspace: Default</option></select>${caret}</span>${caret}
        </div>
        <h1>Autodesk 3ds Max 2016    tf_studio_scenes_biege_01.max</h1>
        <div class="info">
          <button class="arrow" aria-label="Collapse">▸</button>
          <input aria-label="Search" placeholder="Type a keyword or phrase">
          ${tools("binoc", "dish", "star", "user")}<button class="grow">Sign In</button>${caret}${tools("exchange")}${sep}${tool("help")}${caret}
        </div>
        <div class="wins">${tools("min", "restore", "close")}</div>
      </div>
      <nav class="menu">${MENUS.map((m) => html`<button>${this.menuLabel(m)}</button>`)}</nav>
    </header>`;
  }

  private toolbar() {
    return html`<div class="bar" role="toolbar">
      ${tools("undo", "redo")}${sep}${tools("link", "unlink", "bind")}${sep}
      ${combo("Selection filter", "All", "short")}
      ${tool("selectObj", true)}${tools("byName", "rect", "window")}${sep}
      ${tools("move", "rotate", "scale", "place")}${combo("Coordinate system", "View", "short")}${tool("pivot")}${sep}
      ${tool("manip")}${tool("keyboard", true)}${sep}${tool("snap")}${tool("angle", true)}${tools("percent", "spinner")}${sep}
      ${tool("named")}${combo("Named selection sets", "Create Selection Se", "sets")}${sep}
      ${tools("mirror", "align")}${sep}${tools("layerList", "layers")}${sep}
      ${tool("ribbon", true)}${tools("curve", "schematic")}${sep}${tool("material")}${sep}
      <span class="group">${tools("renderSetup", "renderFrame", "render", "renderCloud", "gallery", "warn")}</span>
      <span class="group">${grips}${tool("chevrons")}</span>
      <span class="group">${grips}<button class="script">za_Link_Mana</button></span>
      <span class="group">${grips}${tools(...CORONA)}</span>
    </div>`;
  }

  private explorer() {
    return html`<section class="explorer">
      <nav><button>Select</button><button>Display</button><button>Edit</button></nav>
      <div class="find"><input aria-label="Find"><button aria-label="Clear">${icon("x")}</button><span class="dbl">»</span></div>
      <div class="filters">
        ${FILTERS.map((f) => html`<button class="lit" aria-label=${f}>${icon(f)}</button>`)}
        <hr>${["pageText", "pageBlank", "pageHead"].map((f) => html`<button aria-label=${f}>${icon(f)}</button>`)}
        <hr>${["funnel", "funnelSheet", "pageSplit"].map((f) => html`<button aria-label=${f}>${icon(f)}</button>`)}
      </div>
      <div class="list">
        <h2>Name (Sorted Ascending)</h2>
        <ul class="rows">${NODES.map(([n, k]) => html`<li><svg class="icon" viewBox="0 0 26 26" aria-hidden="true">${bulb}</svg>${icon(k)}<span class="name">${n}</span></li>`)}</ul>
        <div class="hscroll">
          <button aria-label="Scroll left"><svg viewBox="0 0 8 10"><path d="M6 1L2 5l4 4" fill="none" stroke="#333" stroke-width="1.800"/></svg></button>
          <span class="thumb"></span>
          <button aria-label="Scroll right"><svg viewBox="0 0 8 10"><path d="M2 1l4 4-4 4" fill="none" stroke="#333" stroke-width="1.800"/></svg></button>
        </div>
      </div>
      <div class="layout"><select aria-label="Workspace layout"><option>Workspace: Default</option></select>${caret}<i></i><span class="dbl">»</span></div>
    </section>`;
  }

  private viewports() {
    return html`<div class="views">${VIEWS.map((v, i) => html`
      <section class=${classMap({ view: true, active: this.activeView === i })} @click=${() => (this.activeView = i)}>
        <svg viewBox=${v.box} preserveAspectRatio="xMinYMin slice" role="img" aria-label=${v.name}>${v.art}</svg>
        <div class="tags"><button>[+]</button><button>[${v.name}]</button><button>[${v.mode}]</button></div>
      </section>`)}</div>`;
  }

  private timeline() {
    return html`
      <div class="slider"><button>&lt;</button><button class="frame">0 / 100</button><button>&gt;</button></div>
      <div class="track"><button aria-label="Track view">${icon("trackToggle")}</button>
        <div class="ticks">${Array.from({ length: 101 }, (_, i) => html`<span class=${classMap({ tick: true, now: i === 0 })}>${i % 5 ? nothing : i}</span>`)}</div>
      </div>`;
  }

  private commandPanel() {
    return html`<aside class="side">
      <div class="cmd">
        <div class="tabs">${["create", "modify", "hierarchy", "motion", "display", "hammer"].map((t) => html`<button aria-label=${t}>${icon(t)}</button>`)}</div>
        <div class="kinds">${tool("sphere", true)}${tools("shapes", "lamp", "film", "tape", "waves", "gears")}</div>
        ${combo("Category", "Standard Primitives", "wide")}
        <section class="roll first">
          <h3><button aria-label="Collapse">-</button><span>Object Type</span></h3>
          <label class="auto"><input type="checkbox">AutoGrid</label>
          <div class="prims">${PRIMITIVES.map((p) => html`<button>${p}</button>`)}</div>
        </section>
        <section class="roll">
          <h3><button aria-label="Collapse">-</button><span>Name and Color</span></h3>
          <div class="named"><input aria-label="Object name"><button aria-label="Object color"></button></div>
        </section>
      </div>
      <div class="empty"></div>
    </aside>`;
  }

  private statusBar() {
    return html`<footer class="status">
      <div class="listener"><input class="pink" aria-label="Macro recorder"><input aria-label="Listener" value="State Sets E:"></div>
      <div class="lines">
        <div class="line"><span class="msg">None Selected</span>${tools("pin", "lock", "coordMode")}
          ${["X:", "Y:", "Z:"].map((a) => html`<label>${a}<input></label>`)}<span class="cell grid-size">Grid = 100,0cm</span></div>
        <div class="line"><span class="msg">Click or click-and-drag to select objects</span>${tool("isolate")}<button class="cell grid-size tag">Add Time Tag</button></div>
      </div>
      <button class="keybtn" aria-label="Set keys">${icon("key")}</button>
      <div class="pair auto-keys"><button class="cell">Auto Key</button><button class="cell">Set Key</button></div>
      <div class="pair filters2">${combo("Key set", "Selected", "wide")}<div class="line">${tool("tangent")}<button class="cell">Key Filters...</button></div></div>
      <div class="nav">
        ${tools("first", "prev", "play", "next", "last", "zoom", "zoomAll", "extents", "extentsAll")}
        ${tool("keyMode")}<input class="frameno" aria-label="Current frame" value="0">${tools("timeCfg", "region", "pan", "orbit", "maximize")}
      </div>
    </footer>`;
  }

  render() {
    return html`
      ${this.header()}${this.toolbar()}
      <div class="ribbon"><button class="sel">Modeling</button><button>Freeform</button><button>Selection</button><button>Object Paint</button><button>Populate</button>
        <span class="more">${icon("pill")}${caret}</span></div>
      <div class="panelbar"><button>Polygon Modeling</button></div>
      <main class="main">
        <div class="strip"><button class="go" aria-label="Expand layouts">${icon("right")}</button><button class="quad" aria-label="Four view layout">${icon("gridQuad")}</button></div>
        ${this.explorer()}
        <div class="center">${this.viewports()}${this.timeline()}</div>
        ${this.commandPanel()}
      </main>
      ${this.statusBar()}`;
  }
}
